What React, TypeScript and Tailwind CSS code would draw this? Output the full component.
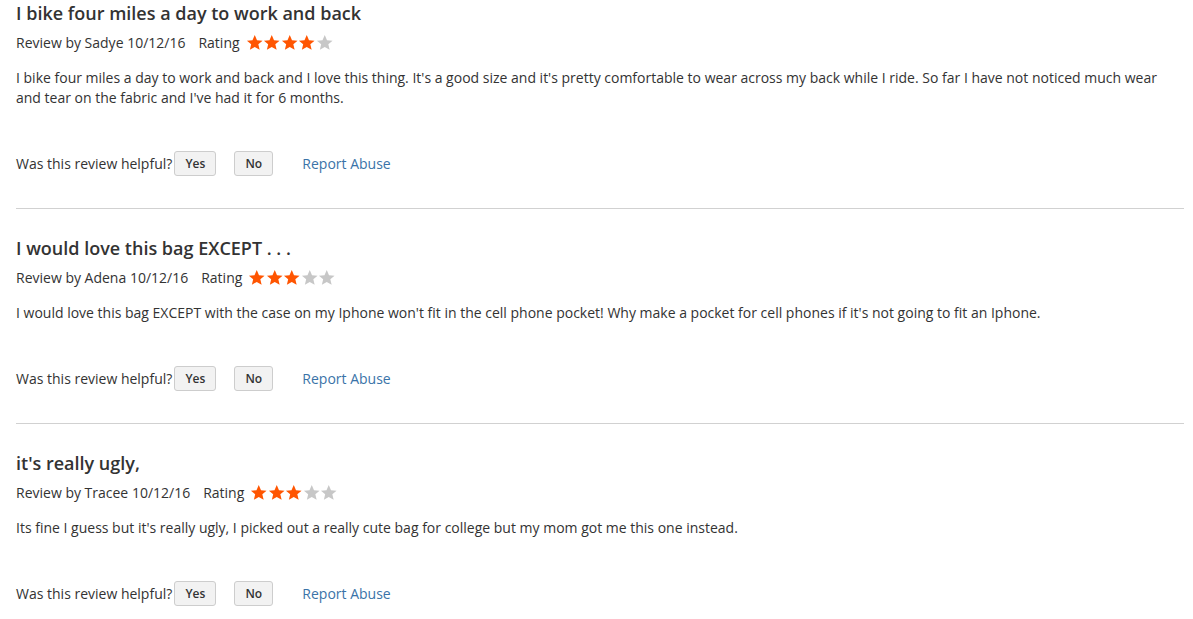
import React from "react";

interface Review {
  id: number;
  title: string;
  author: string;
  date: string;
  rating: number;
  body: string;
}

const reviews: Review[] = [
  {
    id: 1,
    title: "I bike four miles a day to work and back",
    author: "Sadye",
    date: "10/12/16",
    rating: 4,
    body: "I bike four miles a day to work and back and I love this thing. It's a good size and it's pretty comfortable to wear across my back while I ride. So far I have not noticed much wear and tear on the fabric and I've had it for 6 months.",
  },
  {
    id: 2,
    title: "I would love this bag EXCEPT . . .",
    author: "Adena",
    date: "10/12/16",
    rating: 3,
    body: "I would love this bag EXCEPT with the case on my Iphone won't fit in the cell phone pocket! Why make a pocket for cell phones if it's not going to fit an Iphone.",
  },
  {
    id: 3,
    title: "it's really ugly,",
    author: "Tracee",
    date: "10/12/16",
    rating: 3,
    body: "Its fine I guess but it's really ugly, I picked out a really cute bag for college but my mom got me this one instead.",
  },
];

function Star({ filled }: { filled: boolean }) {
  return (
    <svg viewBox="0 0 24 24" className="w-[17.5px] h-[17.5px]" fill={filled ? "#ff5501" : "#c7c7c7"}>
      <path d="M12 1.5l3.1 7.1 7.6.6-5.8 5 1.8 7.5L12 17.7l-6.7 4 1.8-7.5-5.8-5 7.6-.6z" />
    </svg>
  );
}

function ReviewItem({ review, last }: { review: Review; last: boolean }) {
  return (
    <div>
      <h3 className="text-[18px] leading-[26px] font-semibold text-[#333]">{review.title}</h3>
      <div className="flex items-center mt-[7px] h-5 text-[14px] leading-5 text-[#333]">
        <span>
          Review by {review.author} {review.date}
        </span>
        <span className="ml-[13px]">Rating</span>
        <div className="flex ml-[6px] -mt-px">
          {[1, 2, 3, 4, 5].map((i) => (
            <Star key={i} filled={i <= review.rating} />
          ))}
        </div>
      </div>
      <p className="mt-[15px] text-[14px] leading-5 text-[#333] pr-6">{review.body}</p>
      <div className="flex items-center mt-[42px] h-[26px] text-[14px] text-[#333]">
        <span>Was this review helpful?</span>
        <button className="ml-[2px] w-[42px] h-[25px] pt-[2px] bg-[#f2f2f2] border border-[#cdcdcd] rounded-[3px] text-[12px] font-semibold text-[#333]">
          Yes
        </button>
        <button className="ml-[18px] w-[39px] h-[25px] pt-[2px] bg-[#f2f2f2] border border-[#cdcdcd] rounded-[3px] text-[12px] font-semibold text-[#333]">
          No
        </button>
        <a href="#" className="ml-[29px] text-[#3a73a8]">
          Report Abuse
        </a>
      </div>
      {!last && <div className="mt-8 mb-[26px] h-px bg-[#d1d1d1]" />}
    </div>
  );
}

export default function App() {
  return (
    <div className="bg-white min-h-screen pl-4 pr-[9px] pt-0" style={{ fontFamily: '"Open Sans", "Liberation Sans", sans-serif' }}>
      {reviews.map((r, idx) => (
        <ReviewItem key={r.id} review={r} last={idx === reviews.length - 1} />
      ))}
    </div>
  );
}
